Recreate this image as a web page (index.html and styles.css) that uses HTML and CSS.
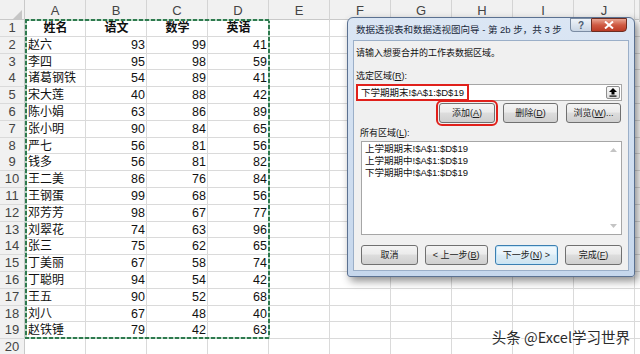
FILE: index.html
```html
<html>
<head>
    <title>数据透视表和数据透视图向导</title>
    <link rel="stylesheet" href="styles.css">
</head>
<body>
<div class="sheet">
    <div class="colhead">
        <div class="corner"><svg width="10" height="10" viewBox="0 0 10 10"><polygon points="10,0 10,10 0,10" fill="#c6c6c6"/></svg></div>
        <div class="ch">A</div><div class="ch">B</div><div class="ch">C</div><div class="ch">D</div><div class="ch">E</div>
        <div class="ch">F</div><div class="ch">G</div><div class="ch">H</div><div class="ch">I</div><div class="ch">J</div>
        <div class="ch"></div>
    </div>
    <div class="row"><div class="rn">1</div><div class="c b">姓名</div><div class="c b">语文</div><div class="c b">数学</div><div class="c b">英语</div></div>
    <div class="row"><div class="rn">2</div><div class="c">赵六</div><div class="c n">93</div><div class="c n">99</div><div class="c n">41</div></div>
    <div class="row"><div class="rn">3</div><div class="c">李四</div><div class="c n">95</div><div class="c n">98</div><div class="c n">59</div></div>
    <div class="row"><div class="rn">4</div><div class="c">诸葛钢铁</div><div class="c n">54</div><div class="c n">89</div><div class="c n">41</div></div>
    <div class="row"><div class="rn">5</div><div class="c">宋大莲</div><div class="c n">40</div><div class="c n">88</div><div class="c n">42</div></div>
    <div class="row"><div class="rn">6</div><div class="c">陈小娟</div><div class="c n">63</div><div class="c n">86</div><div class="c n">89</div></div>
    <div class="row"><div class="rn">7</div><div class="c">张小明</div><div class="c n">90</div><div class="c n">84</div><div class="c n">65</div></div>
    <div class="row"><div class="rn">8</div><div class="c">严七</div><div class="c n">56</div><div class="c n">81</div><div class="c n">56</div></div>
    <div class="row"><div class="rn">9</div><div class="c">钱多</div><div class="c n">56</div><div class="c n">81</div><div class="c n">82</div></div>
    <div class="row"><div class="rn">10</div><div class="c">王二美</div><div class="c n">86</div><div class="c n">76</div><div class="c n">84</div></div>
    <div class="row"><div class="rn">11</div><div class="c">王钢蛋</div><div class="c n">99</div><div class="c n">68</div><div class="c n">56</div></div>
    <div class="row"><div class="rn">12</div><div class="c">邓芳芳</div><div class="c n">98</div><div class="c n">67</div><div class="c n">77</div></div>
    <div class="row"><div class="rn">13</div><div class="c">刘翠花</div><div class="c n">74</div><div class="c n">63</div><div class="c n">96</div></div>
    <div class="row"><div class="rn">14</div><div class="c">张三</div><div class="c n">75</div><div class="c n">62</div><div class="c n">65</div></div>
    <div class="row"><div class="rn">15</div><div class="c">丁美丽</div><div class="c n">67</div><div class="c n">58</div><div class="c n">74</div></div>
    <div class="row"><div class="rn">16</div><div class="c">丁聪明</div><div class="c n">94</div><div class="c n">54</div><div class="c n">42</div></div>
    <div class="row"><div class="rn">17</div><div class="c">王五</div><div class="c n">90</div><div class="c n">52</div><div class="c n">68</div></div>
    <div class="row"><div class="rn">18</div><div class="c">刘八</div><div class="c n">67</div><div class="c n">48</div><div class="c n">40</div></div>
    <div class="row"><div class="rn">19</div><div class="c">赵铁锤</div><div class="c n">79</div><div class="c n">42</div><div class="c n">63</div></div>
    <div class="row"><div class="rn">20</div></div>

    <div class="ants"></div>

    <div class="dialog">
        <div class="titlebar">
            <div class="title">数据透视表和数据透视图向导 - 第 2b 步，共 3 步</div>
            <div class="tbuttons">
                <div class="help">?</div>
                <div class="close">
                    <svg width="10" height="8" viewBox="0 0 10 8"><path d="M1 0.5 L9 7.5 M9 0.5 L1 7.5" stroke="#fff" stroke-width="2"/></svg>
                </div>
            </div>
        </div>
        <div class="client">
            <div class="msg">请输入想要合并的工作表数据区域。</div>
            <div class="lbl">选定区域(<u>R</u>):</div>
            <div class="range">
                <span class="hl">下学期期末!$A$1:$D$19</span>
                <span class="collapse">
                    <svg width="8" height="9" viewBox="0 0 8 9"><path d="M4 0 L8 4 L5.5 4 L5.5 6.5 L2.5 6.5 L2.5 4 L0 4 Z" fill="#000"/><rect x="0.5" y="7.5" width="7" height="1.2" fill="#000"/></svg>
                </span>
            </div>
            <div class="btnrow">
                <div class="btn add">添加(<u>A</u>)</div>
                <div class="btn">删除(<u>D</u>)</div>
                <div class="btn">浏览(<u>W</u>)...</div>
            </div>
            <div class="lbl lbl2">所有区域(<u>L</u>):</div>
            <div class="list">
                <div class="items">
                    <div>上学期期末!$A$1:$D$19</div>
                    <div>上学期期中!$A$1:$D$19</div>
                    <div>下学期期中!$A$1:$D$19</div>
                </div>
                <div class="scroll">
                    <svg width="7" height="4" viewBox="0 0 7 4"><polygon points="3.5,0 7,4 0,4" fill="#c4c4c4"/></svg>
                    <svg width="7" height="4" viewBox="0 0 7 4"><polygon points="0,0 7,0 3.5,4" fill="#c4c4c4"/></svg>
                </div>
            </div>
            <div class="footer">
                <div class="btn w57">取消</div>
                <div class="btn w63">&lt; 上一步(<u>B</u>)</div>
                <div class="btn w64 focus">下一步(<u>N</u>) &gt;</div>
                <div class="btn w57">完成(<u>F</u>)</div>
            </div>
        </div>
    </div>

    <div class="watermark">头条 @Excel学习世界</div>
</div>
</body>
</html>
```

FILE: styles.css
```css
body {
    margin: 0;
    overflow: hidden;
}

.sheet {
    position: relative;
    width: 640px;
    height: 354px;
    overflow: hidden;
    background-color: #fff;
    background-image: linear-gradient(to right, transparent 60px, #dadada 60px);
    background-size: 61px 100%;
    background-position: 25px 0;
    font-family: "Liberation Sans", "Noto Sans CJK SC", sans-serif;
    color: #111;
}

.colhead {
    display: grid;
    grid-template-columns: 25px repeat(10, 61px) 1fr;
    height: 20px;
    box-sizing: border-box;
    background: #f1f1f1;
    border-bottom: 1px solid #c9c9c9;
}

.corner {
    border-right: 1px solid #c9c9c9;
    display: flex;
    align-items: flex-end;
    justify-content: flex-end;
    padding: 0 2px 2px 0;
}

.ch {
    border-right: 1px solid #d4d4d4;
    text-align: center;
    font-size: 13px;
    line-height: 22px;
    color: #444;
}

.row {
    display: grid;
    grid-template-columns: 25px repeat(4, 61px);
    height: 16.8px;
    box-sizing: border-box;
    border-bottom: 1px solid #dadada;
}

.rn {
    background: #f1f1f1;
    border-right: 1px solid #c9c9c9;
    text-align: center;
    font-size: 13px;
    line-height: 16px;
    color: #444;
}

.c {
    padding: 0 3px;
    font-size: 12px;
    line-height: 16px;
    white-space: nowrap;
    overflow: hidden;
}

.n {
    text-align: right;
    padding-right: 2px;
    font-size: 12.5px;
}

.b {
    font-weight: bold;
    text-align: center;
}

/* copy marquee round A1:D19 */
.ants {
    position: absolute;
    left: 25px;
    top: 19px;
    width: 245px;
    height: 320px;
    background:
        repeating-linear-gradient(90deg, #2f7a4f 0 4px, #b9d8c4 4px 6px) top / 100% 2px no-repeat,
        repeating-linear-gradient(90deg, #2f7a4f 0 4px, #b9d8c4 4px 6px) bottom / 100% 2px no-repeat,
        repeating-linear-gradient(180deg, #2f7a4f 0 4px, #b9d8c4 4px 6px) left / 2px 100% no-repeat,
        repeating-linear-gradient(180deg, #2f7a4f 0 4px, #b9d8c4 4px 6px) right / 2px 100% no-repeat;
}

/* wizard window */
.dialog {
    position: absolute;
    left: 347px;
    top: 17px;
    width: 288px;
    height: 260px;
    box-sizing: border-box;
    display: flex;
    flex-direction: column;
    padding: 0 5px 5px;
    background: linear-gradient(#dbe6f4, #c6d7ec);
    border: 1px solid #5b7191;
    border-radius: 6px 6px 3px 3px;
    box-shadow: 3px 4px 8px rgba(0, 0, 0, 0.45);
    font-family: "Liberation Sans", "Noto Sans CJK SC", sans-serif;
    font-size: 9px;
    color: #111;
}

.titlebar {
    display: flex;
    align-items: flex-start;
    height: 22px;
}

.title {
    padding-left: 3px;
    font-size: 9.5px;
    line-height: 24px;
    color: #1b2a3c;
}

.tbuttons {
    display: flex;
    margin-left: auto;
    margin-right: 2px;
}

.help {
    width: 21px;
    height: 14px;
    box-sizing: border-box;
    border: 1px solid #7b8ca3;
    border-right: none;
    border-radius: 0 0 0 4px;
    background: linear-gradient(#eef3f9, #c9d5e4);
    text-align: center;
    font: bold 10px/13px "Liberation Sans", sans-serif;
    color: #4a5a70;
}

.close {
    width: 36px;
    height: 14px;
    box-sizing: border-box;
    border: 1px solid #6c2d22;
    border-radius: 0 0 4px 0;
    background: linear-gradient(#e9a592, #cf5a43 50%, #bb3b25);
    display: flex;
    align-items: center;
    justify-content: center;
}

.client {
    flex: 1;
    display: flex;
    flex-direction: column;
    padding: 0 6px 0 2px;
    background: #f0f0f0;
    border: 1px solid #9bafc8;
}

.msg {
    margin-top: 5px;
    line-height: 14px;
}

.lbl {
    margin-top: 9px;
    line-height: 14px;
}

.lbl2 {
    margin: 3px 0 0 4px;
}

.range {
    display: flex;
    align-items: center;
    height: 17px;
    margin-top: 1px;
    box-sizing: border-box;
    background: #fff;
    border: 1px solid #a6a6a6;
}

.hl {
    align-self: stretch;
    margin: -1px 0 -1px -1px;
    padding: 0 3px;
    border: 2px solid #e0201b;
    font-size: 9.5px;
    line-height: 14px;
}

.collapse {
    display: flex;
    align-items: center;
    justify-content: center;
    width: 14px;
    height: 13px;
    margin-left: auto;
    margin-right: 1px;
    box-sizing: border-box;
    border: 1px solid #8e8e8e;
    border-radius: 2px;
    background: linear-gradient(#fafafa, #dedede);
}

.btnrow {
    display: flex;
    justify-content: flex-end;
    gap: 8px;
    margin: 2px 1px 0 0;
}

.btn {
    width: 55px;
    height: 20px;
    box-sizing: border-box;
    border: 1px solid #707070;
    border-radius: 3px;
    background: linear-gradient(#f4f4f4, #ebebeb 45%, #dddddd 50%, #cfcfcf);
    text-align: center;
    line-height: 18px;
    color: #222;
}

.add {
    width: 56px;
    outline: 2px solid #e0201b;
    outline-offset: 1px;
}

.list {
    display: flex;
    height: 94px;
    margin: 1px 0 0 5px;
    box-sizing: border-box;
    background: #fff;
    border: 1px solid #a6a6a6;
}

.items {
    flex: 1;
    padding: 1px 3px;
    font-size: 9.5px;
    line-height: 12px;
}

.scroll {
    display: flex;
    flex-direction: column;
    justify-content: space-between;
    align-items: center;
    width: 15px;
    padding: 6px 0;
}

.footer {
    display: flex;
    gap: 7px;
    margin: 10px 0 0 5px;
}

.w57 {
    width: 57px;
}

.w63 {
    width: 63px;
}

.w64 {
    width: 64px;
}

.focus {
    border-color: #3c7fb1;
    box-shadow: inset 0 0 0 1px #c6e6f8;
    background: linear-gradient(#f3f9fd, #e8f3fa 45%, #dbecf6 50%, #cfe3ef);
}

.watermark {
    position: absolute;
    right: 10px;
    bottom: 7px;
    font-family: "Noto Sans CJK SC", sans-serif;
    font-size: 14.5px;
    color: #2b2b2b;
    text-shadow: 0 0 2px #fff, 0 0 2px #fff, 1px 1px 0 #fff;
}
```
